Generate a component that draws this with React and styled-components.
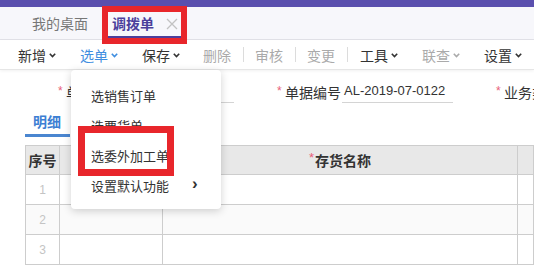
import React from 'react';
import styled, { createGlobalStyle } from 'styled-components';

const GlobalStyle = createGlobalStyle`
  html, body {
    margin: 0;
    padding: 0;
    background: #fff;
  }
  body {
    width: 534px;
    height: 267px;
    overflow: hidden;
    font-family: 'Liberation Sans', 'Noto Sans CJK SC', sans-serif;
    color: #333;
  }
`;

const App = () => {
  return (
    <Page>
      <GlobalStyle />
      <TopBar />
      <TabBar>
        <Tab>我的桌面</Tab>
        <Tab active>
          调拨单
          <CloseSvg width='12' height='12' viewBox='0 0 12 12'>
            <path d='M1 1 L11 11 M11 1 L1 11' stroke='#c2c2c2' strokeWidth='1.3' fill='none' />
          </CloseSvg>
          <Mark top={-1} right={-6} bottom={-5} left={-4} />
        </Tab>
      </TabBar>

      <Toolbar>
        <Tool>新增<Chevron /></Tool>
        <Tool tone='blue'>
          选单<Chevron />
          <Menu>
            <MenuItem>选销售订单</MenuItem>
            <MenuItem>选要货单</MenuItem>
            <MenuItem>
              选委外加工单
              <Mark top={-14} right={47} bottom={-6} left={7} thick={7} />
            </MenuItem>
            <MenuItem>
              设置默认功能
              <SubArrow>›</SubArrow>
            </MenuItem>
          </Menu>
        </Tool>
        <Tool>保存<Chevron /></Tool>
        <Tool tone='muted' plain>删除</Tool>
        <Sep />
        <Tool tone='muted' plain>审核</Tool>
        <Sep />
        <Tool tone='muted' plain>变更</Tool>
        <Sep />
        <Tool>工具<Chevron /></Tool>
        <Tool tone='muted'>联查<Chevron /></Tool>
        <Tool>设置<Chevron /></Tool>
      </Toolbar>

      <Form>
        <Field>
          <Star>*</Star>
          <Label>单据日期</Label>
          <Input />
        </Field>
        <Field>
          <Star>*</Star>
          <Label>单据编号</Label>
          <Input>AL-2019-07-0122</Input>
        </Field>
        <Field>
          <Star>*</Star>
          <Label>业务类型</Label>
        </Field>
      </Form>

      <SubTabs>
        <SubTab>明细</SubTab>
      </SubTabs>

      <Grid>
        <HeadCell>序号</HeadCell>
        <HeadCell />
        <HeadCell><Star head>*</Star>存货名称</HeadCell>
        <HeadCell />
        {[1, 2, 3].map((n) => (
          <React.Fragment key={n}>
            <Cell striped={n === 2}>{n}</Cell>
            <Cell striped={n === 2} />
            <Cell striped={n === 2} />
            <Cell striped={n === 2} />
          </React.Fragment>
        ))}
      </Grid>
    </Page>
  );
};

const Chevron = () => (
  <ChevronSvg width='7' height='5' viewBox='0 0 7 5'>
    <path d='M0.8 0.8 L3.5 3.6 L6.2 0.8' fill='none' stroke='currentColor' strokeWidth='1.6' />
  </ChevronSvg>
);

const Page = styled.div`
  width: 534px;
  height: 267px;
  overflow: hidden;
  position: relative;
`;

const TopBar = styled.div`
  height: 7px;
  background: #5a4fae;
`;

const TabBar = styled.div`
  height: 32px;
  background: #f7f7fb;
  border-bottom: 1px solid #e2e2e8;
  display: flex;
  align-items: stretch;
  padding-left: 20px;
`;

const Tab = styled.div`
  position: relative;
  display: flex;
  align-items: center;
  white-space: nowrap;
  font-size: 14px;
  line-height: 16px;
  padding: ${(p) => (p.active ? '1px 3px 0 6px' : '1px 12px 0')};
  margin-left: ${(p) => (p.active ? '6px' : '0')};
  color: ${(p) => (p.active ? '#4b3f9c' : '#777')};
  font-weight: ${(p) => (p.active ? 'bold' : 'normal')};
  box-shadow: ${(p) => (p.active ? 'inset 0 -3px 0 #4b3f9c' : 'none')};
`;

const CloseSvg = styled.svg`
  margin-left: 12px;
`;

const Mark = styled.span`
  position: absolute;
  top: ${(p) => p.top}px;
  right: ${(p) => p.right}px;
  bottom: ${(p) => p.bottom}px;
  left: ${(p) => p.left}px;
  border: ${(p) => p.thick || 6}px solid #e8262b;
  pointer-events: none;
`;

const Toolbar = styled.div`
  height: 29px;
  display: flex;
  align-items: center;
  padding-left: 6px;
  border-bottom: 1px solid #e6e6e6;
  box-shadow: 0 1px 3px rgba(0, 0, 0, 0.06);
`;

const toneColor = { blue: '#3f8ee0', muted: '#aaa' };

const Tool = styled.div`
  position: relative;
  flex-shrink: 0;
  white-space: nowrap;
  height: 29px;
  display: flex;
  align-items: center;
  font-size: 14px;
  color: ${(p) => toneColor[p.tone] || '#333'};
  padding: ${(p) => (p.plain ? '0 12px 0 11px' : '0 12px')};
`;

const ChevronSvg = styled.svg`
  margin-left: 3px;
  margin-top: 1px;
  flex-shrink: 0;
`;

const Sep = styled.span`
  flex-shrink: 0;
  width: 1px;
  height: 15px;
  background: #dcdcdc;
`;

const Menu = styled.div`
  position: absolute;
  top: calc(100% + 1px);
  left: 3px;
  width: 150px;
  padding: 10px 0 9px;
  background: #fff;
  border-radius: 4px;
  box-shadow: 0 2px 8px rgba(0, 0, 0, 0.18);
  z-index: 5;
`;

const MenuItem = styled.div`
  position: relative;
  height: 30px;
  display: flex;
  align-items: center;
  padding-left: 20px;
  font-size: 13px;
  color: #333;
`;

const SubArrow = styled.span`
  position: absolute;
  left: 121px;
  top: 5px;
  font-size: 17px;
  font-weight: bold;
  line-height: 18px;
  color: #333;
`;

const Form = styled.div`
  display: flex;
  padding: 9px 0 0 58px;
  height: 25px;
`;

const Field = styled.div`
  width: 219px;
  flex-shrink: 0;
  display: flex;
  align-items: center;
  white-space: nowrap;
`;

const Star = styled.span`
  color: #e8607a;
  font-size: ${(p) => (p.head ? '13px' : '12px')};
  font-weight: normal;
  margin-right: ${(p) => (p.head ? '1px' : '2px')};
  width: ${(p) => (p.head ? 'auto' : '6px')};
  position: relative;
  top: ${(p) => (p.head ? '-3px' : '-1px')};
`;

const Label = styled.span`
  font-size: 14px;
  white-space: nowrap;
`;

const Input = styled.div`
  margin-left: 1px;
  width: 111px;
  height: 22px;
  box-sizing: border-box;
  padding-left: 2px;
  border-bottom: 1px solid #d4d4d4;
  font-size: 13px;
  line-height: 20px;
  color: #333;
  white-space: nowrap;
`;

const SubTabs = styled.div`
  display: flex;
  padding: 5px 0 0 25px;
  height: 33px;
  box-sizing: border-box;
`;

const SubTab = styled.div`
  padding: 4px 9px 0 8px;
  font-size: 14px;
  font-weight: bold;
  color: #3d7fd3;
  border-bottom: 3px solid #4a86d0;
  line-height: 18px;
`;

const Grid = styled.div`
  margin: 8px 0 0 25px;
  display: grid;
  grid-template-columns: 34px 103px 355px 1fr;
  grid-auto-rows: 30px;
  grid-template-rows: 29px;
  border-top: 1px solid #cdcdcd;
  border-left: 1px solid #cdcdcd;
`;

const HeadCell = styled.div`
  background: #e8e8e8;
  border-right: 1px solid #cdcdcd;
  border-bottom: 1px solid #cdcdcd;
  display: flex;
  align-items: center;
  justify-content: center;
  font-size: 14px;
  font-weight: bold;
  color: #333;
`;

const Cell = styled.div`
  background: ${(p) => (p.striped ? '#fafafa' : '#fff')};
  border-right: 1px solid #cdcdcd;
  border-bottom: 1px solid #cdcdcd;
  display: flex;
  align-items: center;
  justify-content: center;
  font-size: 12px;
  color: #c4c4c4;
`;

export default App;
